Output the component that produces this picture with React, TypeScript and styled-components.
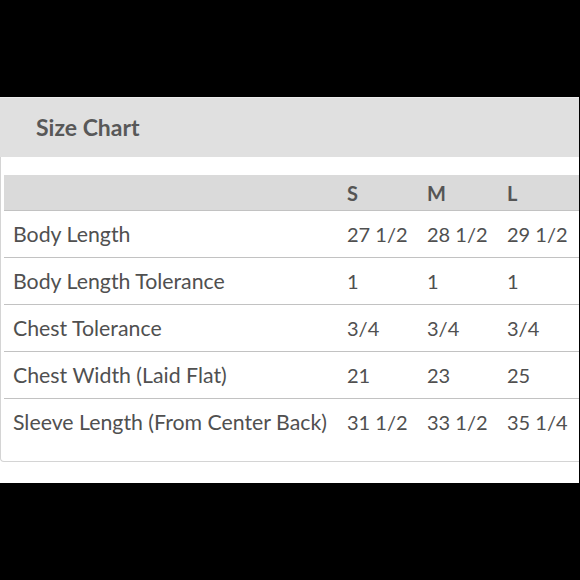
import React from "react";
import styled, { createGlobalStyle } from "styled-components";

const Global = createGlobalStyle`
  html, body { margin: 0; padding: 0; background: #000; }
  body { font-family: Lato, "Open Sans", sans-serif; width: 580px; height: 580px; overflow: hidden; }
`;

const Page = styled.div`
  padding-top: 97px;
  width: 580px;
`;

const Panel = styled.div`
  width: 579px;
  background: #fff;
  padding-bottom: 21px;
`;

const Header = styled.div`
  height: 57px;
  padding-bottom: 2px;
  border-top: 1px solid #ececec;
  background: #e0e0e0;
  display: flex;
  align-items: center;
  padding-left: 36px;
  font-size: 23px;
  font-weight: 700;
  color: #585858;
`;

const Card = styled.div`
  background: #fff;
  border: 1px solid #d4d4d4;
  border-top: none;
  border-right: none;
  border-radius: 0 0 0 4px;
  padding: 18px 0 16px 3px;
`;

const Row = styled.div<{ $head?: boolean; $last?: boolean }>`
  display: grid;
  grid-template-columns: 334px 80px 80px 1fr;
  align-items: center;
  height: ${(p) => (p.$head ? 35 : 46)}px;
  background: ${(p) => (p.$head ? "#dadada" : "#fff")};
  border-bottom: ${(p) => (p.$last ? "none" : "1px solid #c2c2c2")};
  font-size: 20px;
  font-weight: ${(p) => (p.$head ? 700 : 400)};
  color: ${(p) => (p.$head ? "#555" : "#505050")};
`;

const Cell = styled.div<{ $label?: boolean }>`
  padding-left: 9px;
  white-space: nowrap;
  font-size: ${(p) => (p.$label ? "21.3px" : "inherit")};
`;

const rows: [string, string, string, string][] = [
  ["Body Length", "27 1/2", "28 1/2", "29 1/2"],
  ["Body Length Tolerance", "1", "1", "1"],
  ["Chest Tolerance", "3/4", "3/4", "3/4"],
  ["Chest Width (Laid Flat)", "21", "23", "25"],
  ["Sleeve Length (From Center Back)", "31 1/2", "33 1/2", "35 1/4"],
];

export default function App() {
  return (
    <Page>
      <Global />
      <Panel>
        <Header>Size Chart</Header>
        <Card>
          <Row $head>
            <Cell />
            <Cell>S</Cell>
            <Cell>M</Cell>
            <Cell>L</Cell>
          </Row>
          {rows.map((r, i) => (
            <Row key={r[0]} $last={i === rows.length - 1}>
              {r.map((c, j) => (
                <Cell key={j} $label={j === 0}>
                  {c}
                </Cell>
              ))}
            </Row>
          ))}
        </Card>
      </Panel>
    </Page>
  );
}
